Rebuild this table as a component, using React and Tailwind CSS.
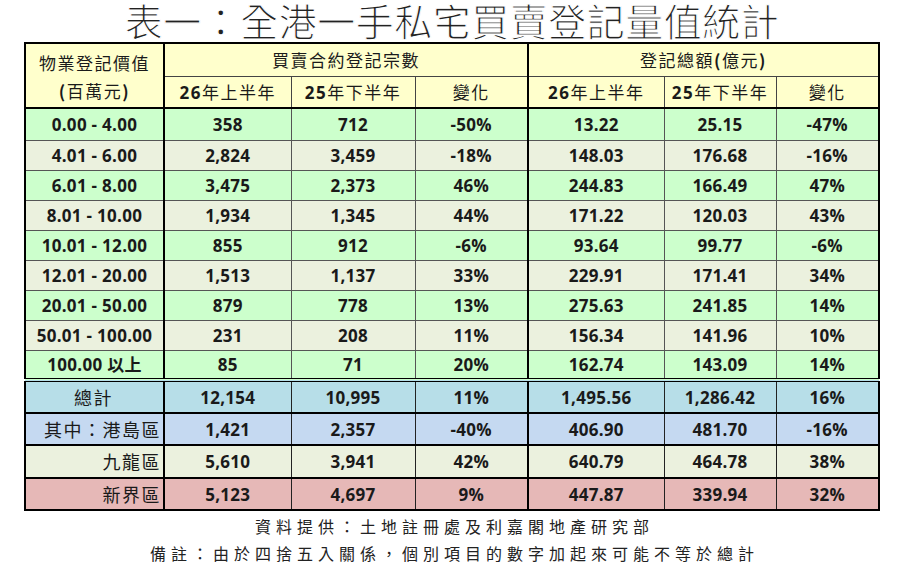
import React from 'react'

const CJK = "'Noto Sans CJK TC', 'Noto Sans', sans-serif"
const NUM = "'Open Sans', 'Noto Sans CJK TC', sans-serif"

const BANDS = [
  ['0.00 - 4.00', '358', '712', '-50%', '13.22', '25.15', '-47%'],
  ['4.01 - 6.00', '2,824', '3,459', '-18%', '148.03', '176.68', '-16%'],
  ['6.01 - 8.00', '3,475', '2,373', '46%', '244.83', '166.49', '47%'],
  ['8.01 - 10.00', '1,934', '1,345', '44%', '171.22', '120.03', '43%'],
  ['10.01 - 12.00', '855', '912', '-6%', '93.64', '99.77', '-6%'],
  ['12.01 - 20.00', '1,513', '1,137', '33%', '229.91', '171.41', '34%'],
  ['20.01 - 50.00', '879', '778', '13%', '275.63', '241.85', '14%'],
  ['50.01 - 100.00', '231', '208', '11%', '156.34', '141.96', '10%'],
  ['100.00 以上', '85', '71', '20%', '162.74', '143.09', '14%'],
]

const TOTALS = [
  { label: '總計', align: 'text-center', bg: 'bg-[#b7dee8]', h: 'h-[33px]', vals: ['12,154', '10,995', '11%', '1,495.56', '1,286.42', '16%'] },
  { label: '其中：港島區', align: 'text-right', bg: 'bg-[#c5d9f1]', h: 'h-[32px]', vals: ['1,421', '2,357', '-40%', '406.90', '481.70', '-16%'] },
  { label: '九龍區', align: 'text-right', bg: 'bg-[#ebf1de]', h: 'h-[33px]', vals: ['5,610', '3,941', '42%', '640.79', '464.78', '38%'] },
  { label: '新界區', align: 'text-right', bg: 'bg-[#e6b8b7]', h: 'h-[32px]', vals: ['5,123', '4,697', '9%', '447.87', '339.94', '32%'] },
]

// column borders: thick after col 0 and col 3
const colBorder = i => (i === 0 || i === 3 ? 'border-r-2 border-r-black' : '')

function Period({ yr, half }) {
  return (
    <span>
      <span className="font-bold" style={{ fontFamily: NUM }}>{yr}</span>年{half}半年
    </span>
  )
}

export default function App() {
  return (
    <div className="w-[918px] h-[571px] bg-white overflow-hidden" style={{ fontFamily: CJK }}>
      <div className="w-[856px] ml-[24px]">
        {/* 標題 */}
        <h1 className="h-[42px] text-center text-[38px] leading-[40px] text-[#222] tracking-[0.5px] [-webkit-text-stroke:1.1px_#fff]">
          表一：全港一手私宅買賣登記量值統計
        </h1>

        <table className="w-full table-fixed border-collapse border-2 border-black text-[#1a1a1a]">
          <colgroup>
            <col className="w-[139px]" />
            <col className="w-[127px]" />
            <col className="w-[124px]" />
            <col className="w-[113px]" />
            <col className="w-[136px]" />
            <col className="w-[112px]" />
            <col />
          </colgroup>
          <thead className="bg-[#ffffcc] text-[17px] tracking-[1.5px]">
            <tr className="h-[33px]">
              <td className="border-r-2 border-r-black text-center align-bottom pb-[1px]">物業登記價值</td>
              <td colSpan={3} className="border border-[#444] border-r-2 border-r-black text-center">買賣合約登記宗數</td>
              <td colSpan={3} className="border border-[#444] text-center">
                登記總額<span className="font-bold">(</span>億元<span className="font-bold">)</span>
              </td>
            </tr>
            <tr className="h-[32px] border-b-2 border-black">
              <td className="border-r-2 border-r-black text-center align-top pt-[2px]">
                <span className="font-bold">(</span>百萬元<span className="font-bold">)</span>
              </td>
              <td className="border border-[#444] text-center"><Period yr="26" half="上" /></td>
              <td className="border border-[#444] text-center"><Period yr="25" half="下" /></td>
              <td className="border border-[#444] border-r-2 border-r-black text-center">變化</td>
              <td className="border border-[#444] text-center"><Period yr="26" half="上" /></td>
              <td className="border border-[#444] text-center"><Period yr="25" half="下" /></td>
              <td className="border border-[#444] text-center">變化</td>
            </tr>
          </thead>
          <tbody className="text-[17px] font-bold tracking-[0.3px]" style={{ fontFamily: NUM }}>
            {BANDS.map((r, i) => (
              <tr key={r[0]} className={`${i === 0 ? 'h-[32px]' : 'h-[30px]'} ${i % 2 === 0 ? 'bg-[#ccffcc]' : 'bg-[#ebf1de]'}`}>
                {r.map((v, j) => (
                  <td key={j} className={`border border-[#555] text-center leading-none ${colBorder(j)}`}>{v}</td>
                ))}
              </tr>
            ))}
            {TOTALS.map((t, i) => (
              <tr key={t.label} className={`${t.h} ${t.bg} ${i === 0 ? 'border-t-4 border-double border-black' : 'border-t-2 border-black'}`}>
                <td className={`border-x border-[#222] border-r-2 border-r-black ${t.align} font-normal text-[18px] tracking-[1.5px] pr-[2px]`} style={{ fontFamily: CJK }}>
                  {t.label}
                </td>
                {t.vals.map((v, j) => (
                  <td key={j} className={`border-x border-[#222] text-center leading-none ${colBorder(j + 1)}`}>{v}</td>
                ))}
              </tr>
            ))}
          </tbody>
        </table>

        {/* 資料來源 */}
        <div className="text-center text-[16px] text-[#222] tracking-[5px] leading-[27px] mt-[2px] pl-[5px]">
          <p>資料提供：土地註冊處及利嘉閣地產研究部</p>
          <p>備註：由於四捨五入關係，個別項目的數字加起來可能不等於總計</p>
        </div>
      </div>
    </div>
  )
}
